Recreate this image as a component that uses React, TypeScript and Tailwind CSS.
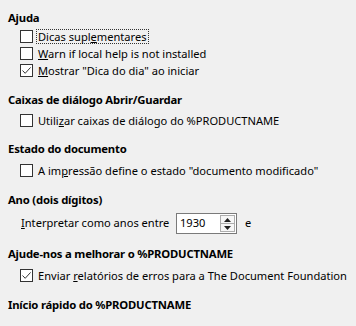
import React from "react";

const font = { fontFamily: '"Noto Sans", "Open Sans", sans-serif' };

function Box({ checked }: { checked?: boolean }) {
  return (
    <span className="w-[13px] h-[13px] border border-[#333333] bg-white flex items-center justify-center shrink-0">
      {checked && (
        <svg width="11" height="11" viewBox="0 0 11 11">
          <polyline points="1.5,5.5 4.2,8.3 9.6,2.4" fill="none" stroke="#333333" strokeWidth="1" />
        </svg>
      )}
    </span>
  );
}

function Row({ checked, children, focus }: { checked?: boolean; children: React.ReactNode; focus?: boolean }) {
  return (
    <div className="h-[17px] flex items-center pl-[12px]">
      <Box checked={checked} />
      <span
        className={
          "ml-[3px] px-[1px] leading-[13px] whitespace-nowrap border border-dotted " +
          (focus ? "border-[#333]" : "border-transparent")
        }
      >
        {children}
      </span>
    </div>
  );
}

function H({ children, className = "" }: { children: React.ReactNode; className?: string }) {
  return (
    <div className={"h-[17px] leading-[17px] font-bold text-[11.3px] tracking-[-0.2px] whitespace-nowrap " + className}>
      {children}
    </div>
  );
}

export default function App() {
  return (
    <div style={font} className="w-[356px] h-[326px] bg-[#f0f0f0] text-[11.1px] text-black pl-[8px] pt-[9px] overflow-hidden">
      <H>Ajuda</H>
      <div className="mt-[2px]">
        <Row focus>
          Dicas supl<u>e</u>mentares
        </Row>
        <Row>
          <u>W</u>arn if local help is not installed
        </Row>
        <Row checked>
          <u>M</u>ostrar "Dica do dia" ao iniciar
        </Row>
      </div>
      <H className="mt-[12px]">Caixas de diálogo Abrir/Guardar</H>
      <div className="mt-[4px]">
        <Row>
          Utili<u>z</u>ar caixas de diálogo do %PRODUCTNAME
        </Row>
      </div>
      <H className="mt-[11px]">Estado do documento</H>
      <div className="mt-[5px]">
        <Row>
          A im<u>p</u>ressão define o estado "documento modificado"
        </Row>
      </div>
      <H className="mt-[12px]">Ano (dois dígitos)</H>
      <div className="mt-[5px] h-[21px] flex items-center pl-[13px]">
        <span className="w-[155px] whitespace-nowrap">
          <u>I</u>nterpretar como anos entre
        </span>
        <div className="w-[61px] h-[21px] border border-[#7a7a7a] bg-white flex items-center pl-[3px] pr-[1px]">
          <span className="flex-1">1930</span>
          <div className="w-[15px] h-[17px] border border-[#adadad] bg-[#f7f7f7] flex flex-col">
            <div className="flex-1 flex items-center justify-center border-b border-[#adadad]">
              <svg width="7" height="4" viewBox="0 0 7 4">
                <polygon points="0,4 7,4 3.5,0" fill="#222" />
              </svg>
            </div>
            <div className="flex-1 flex items-center justify-center">
              <svg width="7" height="4" viewBox="0 0 7 4">
                <polygon points="0,0 7,0 3.5,4" fill="#222" />
              </svg>
            </div>
          </div>
        </div>
        <span className="ml-[8px]">e</span>
      </div>
      <H className="mt-[11px]">Ajude-nos a melhorar o %PRODUCTNAME</H>
      <div className="mt-[5px]">
        <Row checked>
          Enviar <u>r</u>elatórios de erros para a The Document Foundation
        </Row>
      </div>
      <H className="mt-[12px]">Início rápido do %PRODUCTNAME</H>
    </div>
  );
}
